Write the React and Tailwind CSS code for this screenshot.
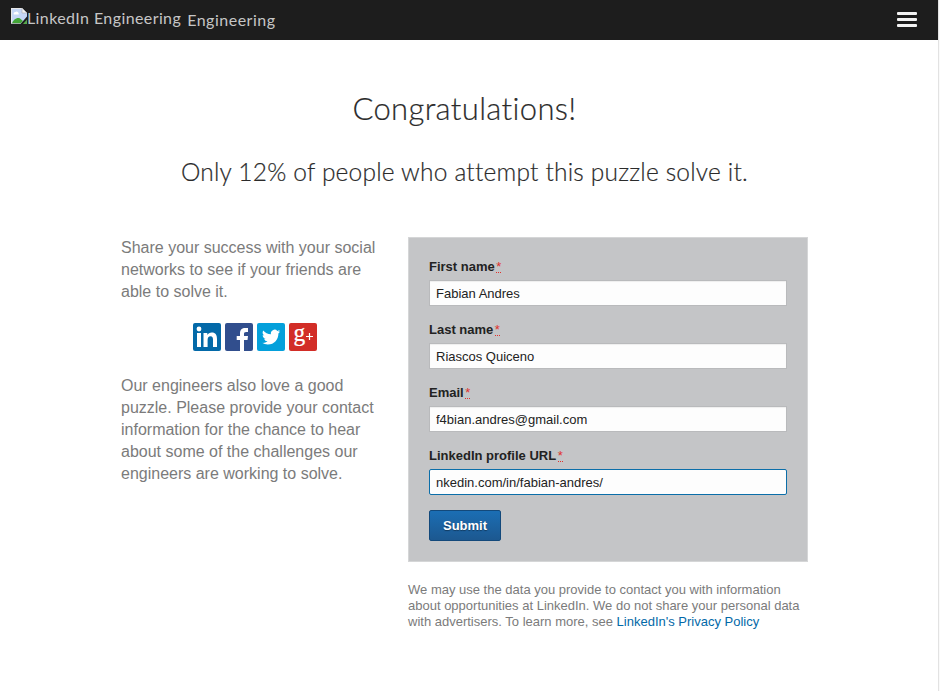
import React from 'react';

function BrokenImage() {
  return (
    <svg className="block shrink-0" width="16" height="16" viewBox="0 0 16 16">
      <path d="M0 0H11L16 5V10L10 16H0Z" fill="#c5d6f5" />
      <path d="M0 .5H11M.5 0V16" stroke="#e7e7e7" fill="none" />
      <path d="M11 0V5H16Z" fill="#f4f4f4" stroke="#aaa" strokeWidth=".6" />
      <path d="M2.5 6a2 2 0 0 1 2-2 1.8 1.8 0 0 1 3 1.2Q8.500 6 7.500 6.500H3Z" fill="#fff" />
      <path d="M1 15.500C2 12 6 9 9 10.500L12 13 9.500 15.500Z" fill="#43a537" />
      <path d="M16 8.500L9.500 16H12L16 11.500Z" fill="#1d1d1d" />
      <path d="M16 11.500V16H12Z" fill="#56a84b" />
      <path d="M0 15.500H9" stroke="#aaa" strokeWidth=".7" />
    </svg>
  );
}

function ShareIcons() {
  return (
    <div className="flex h-7 gap-1 pl-[72px]">
      <svg width="28" height="28" viewBox="0 0 28 28">
        <rect width="28" height="28" rx="2" fill="#0369a8" />
        <circle cx="6" cy="6" r="2.400" fill="#fff" />
        <path d="M4 10h4v14H4zM10.500 10h3.800v2C15.200 10.500 16.700 9.600 18.700 9.600c4 0 5.300 2.500 5.300 6.400v8h-4v-7.200c0-2-.5-3.600-2.500-3.600s-2.900 1.500-2.900 3.600V24h-4.100z" fill="#fff" />
      </svg>
      <svg width="28" height="28" viewBox="0 0 28 28">
        <rect width="28" height="28" rx="2" fill="#314e8d" />
        <path d="M15 28V17h-3.300v-4H15v-2.500C15 6.700 17 5 20.200 5H23v4h-1.900C19.500 9 19 9.700 19 11v2h4l-.5 4H19v11z" fill="#fff" />
      </svg>
      <svg width="28" height="28" viewBox="0 0 28 28">
        <rect width="28" height="28" rx="2" fill="#04a0db" />
        <g transform="translate(5 5) scale(.76)">
          <path d="M23.950 4.570a10 10 0 0 1-2.820.770 4.960 4.960 0 0 0 2.160-2.720c-.950.550-2 .950-3.130 1.180a4.920 4.920 0 0 0-8.380 4.480C7.690 8.090 4.070 6.130 1.640 3.160a4.920 4.920 0 0 0 1.520 6.570 4.900 4.900 0 0 1-2.230-.610v.060a4.920 4.920 0 0 0 3.950 4.830 5 5 0 0 1-2.210.080 4.940 4.940 0 0 0 4.600 3.420A9.870 9.870 0 0 1 0 19.540a14 14 0 0 0 7.550 2.210c9.050 0 14-7.500 14-13.980v-.640a9.940 9.940 0 0 0 2.400-2.560z" fill="#fff" />
        </g>
      </svg>
      <svg className="overflow-visible" width="28" height="28" viewBox="0 0 28 28">
        <rect width="28" height="28" rx="2" fill="#d22d27" />
        <text transform="translate(4.600 18.400) scale(.9 1)" fill="#fff" stroke="#fff" strokeWidth=".25" fontSize="26" fontFamily="'Liberation Serif', serif">g</text>
        <path d="M17 13.500h7M20.500 10v7" stroke="#fff" strokeWidth="1.200" />
      </svg>
    </div>
  );
}

function Field({ label, value, focused }) {
  return (
    <div className="mb-[15px]">
      <label className="flex h-[22px] items-start pt-px text-[13px] leading-[16px] font-bold text-[#222] whitespace-nowrap">
        <span>{label}</span>
        <span className="ml-[1.5px] h-[14px] border-b border-dotted border-[#e0322d] text-[13px] font-normal leading-[15px] text-[#e0322d]">*</span>
      </label>
      <input
        defaultValue={value}
        className={
          'block h-[26px] w-[358px] border bg-[#fdfdfd] px-[6px] text-[13px] text-[#222] outline-none ' +
          (focused ? 'rounded-[2px] border-[#0b6ea9]' : 'border-[#b9babc] shadow-[inset_0_1px_1px_#eeeeee]')
        }
      />
    </div>
  );
}

export default function App() {
  return (
    <div className="flex h-[691px] w-[940px] overflow-hidden bg-white font-['Liberation_Sans',Arial,sans-serif]">
      <div className="w-[938px] shrink-0">
        <header className="flex h-10 items-start justify-between bg-[#1d1d1d] pl-[11px] pr-[21px] text-[#c6c6c6]">
          <div className="flex font-['Lato',sans-serif] text-[16px] leading-[20px] whitespace-nowrap">
            <div className="flex pt-[8px]">
              <BrokenImage />
              <span className="tracking-[0.4px]">LinkedIn Engineering</span>
            </div>
            <span className="ml-[6px] pt-[10px] tracking-[0.5px]">Engineering</span>
          </div>
          <div className="flex flex-col gap-[3px] pt-3">
            <span className="h-[3px] w-5 rounded-[1px] bg-[#f3f3f3]" />
            <span className="h-[3px] w-5 rounded-[1px] bg-[#f3f3f3]" />
            <span className="h-[3px] w-5 rounded-[1px] bg-[#f3f3f3]" />
          </div>
        </header>
        <main className="ml-[121px] w-[687px]">
          <div className="flex h-[197px] flex-col items-center pt-[48px] font-['Lato',sans-serif] font-light text-[#2b2b2b] whitespace-nowrap [-webkit-text-stroke:0.2px_#2b2b2b]">
            <h1 className="text-[31px] leading-[40px] tracking-[0.35px]">Congratulations!</h1>
            <h2 className="mt-[28px] text-[24.5px] leading-[32px] tracking-[0.2px]">Only 12% of people who attempt this puzzle solve it.</h2>
          </div>
          <div className="flex">
            <section className="w-[287px] shrink-0 text-[16px] leading-[22px] text-[#7b7b7b] whitespace-nowrap">
              <p className="mb-5">Share your success with your social<br />networks to see if your friends are<br />able to solve it.</p>
              <ShareIcons />
              <p className="mt-6">Our engineers also love a good<br />puzzle. Please provide your contact<br />information for the chance to hear<br />about some of the challenges our<br />engineers are working to solve.</p>
            </section>
            <section className="w-[400px] shrink-0">
              <div className="h-[325px] border border-[#d5d6d7] bg-[#c4c5c7] px-5 pt-[20px]">
                <Field label="First name" value="Fabian Andres" />
                <Field label="Last name" value="Riascos Quiceno" />
                <Field label="Email" value="f4bian.andres@gmail.com" />
                <Field label="LinkedIn profile URL" value="nkedin.com/in/fabian-andres/" focused />
                <button className="block h-[31px] w-[72px] rounded-[2px] border border-[#13497b] bg-linear-to-b from-[#1b6eb4] to-[#1c5890] text-[13px] font-bold text-white [text-shadow:0_1px_1px_#123b61]">Submit</button>
              </div>
              <p className="mt-5 text-[13px] leading-4 text-[#7b7b7b] whitespace-nowrap">We may use the data you provide to contact you with information<br />about opportunities at LinkedIn. We do not share your personal data<br />with advertisers. To learn more, see <a className="text-[#0369a8]">LinkedIn's Privacy Policy</a></p>
            </section>
          </div>
        </main>
      </div>
      <div className="w-[2px] shrink-0 border-l border-[#e2e2e2] bg-[#fafafa]" />
    </div>
  );
}
